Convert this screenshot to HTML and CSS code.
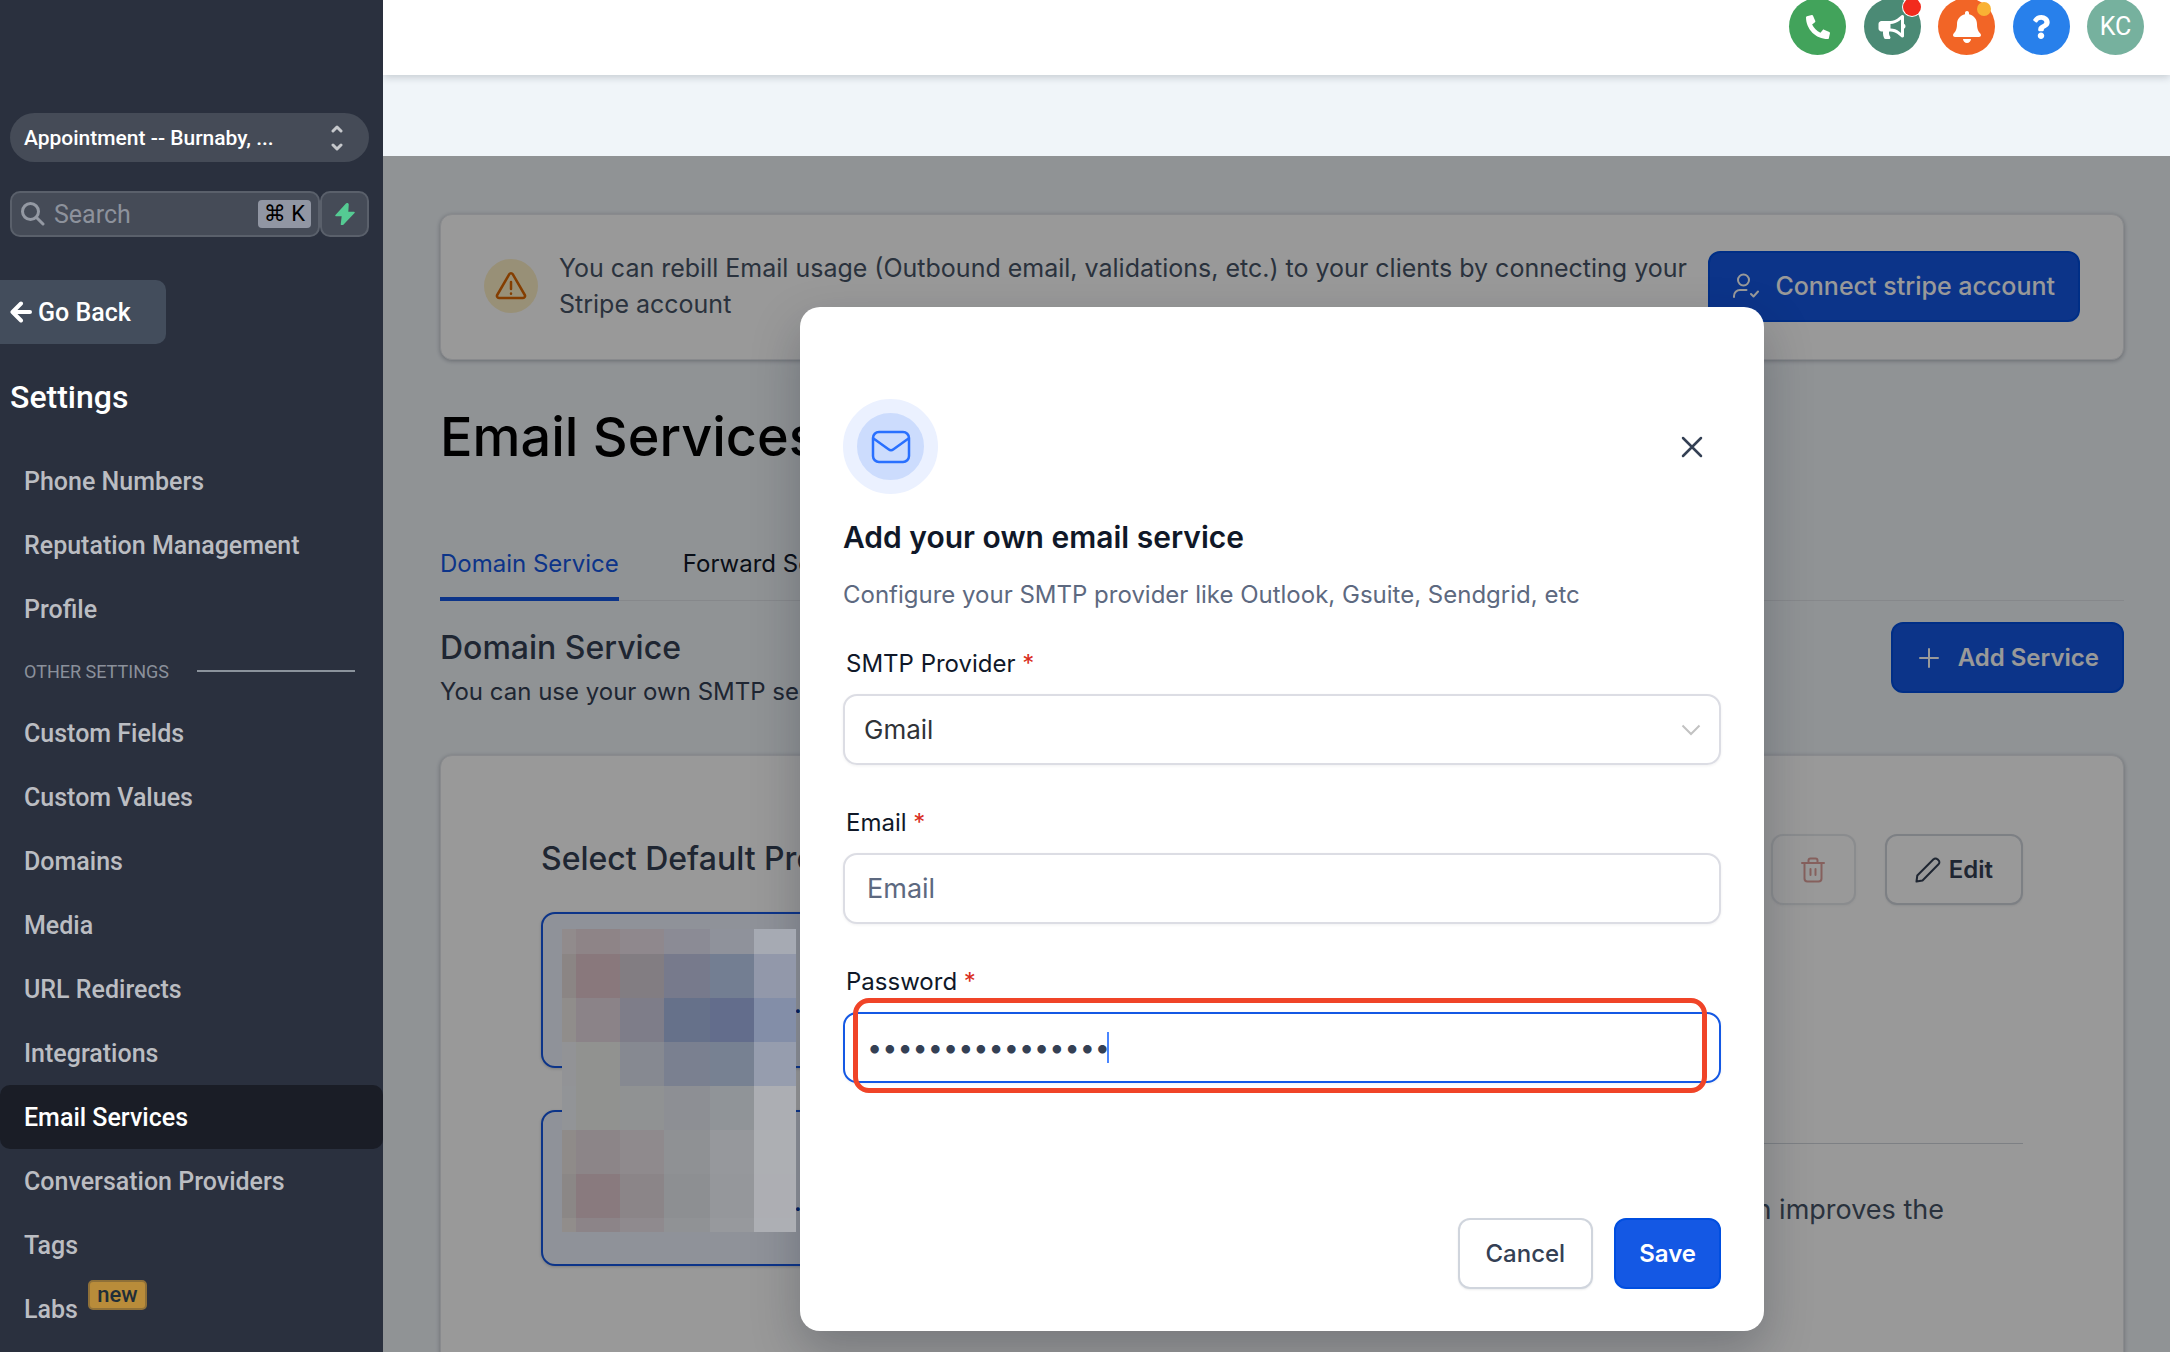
FILE: index.html
```html
<!DOCTYPE html>
<html lang="en">
<head>
<meta charset="utf-8">
<title>Email Services</title>
<link rel="stylesheet" href="styles.css">
</head>
<body>
<aside class="sidebar">
  <button class="account" type="button">
    <span>Appointment -- Burnaby, ...</span>
    <svg width="12" height="26" viewBox="0 0 12 26" fill="none" stroke="#c6c8cc" stroke-width="3" stroke-linecap="round" stroke-linejoin="round"><path d="M2 6l4-4 4 4M2 20l4 4 4-4"/></svg>
  </button>
  <div class="search-row">
    <label class="search">
      <svg width="24" height="24" viewBox="0 0 24 24" fill="none" stroke="#9499a3" stroke-width="3" stroke-linecap="round"><circle cx="9.500" cy="9.500" r="8"/><path d="M15.500 15.500L22 22"/></svg>
      <input type="text" placeholder="Search" aria-label="Search">
      <kbd>⌘ K</kbd>
    </label>
    <button class="quick" type="button" aria-label="Quick actions">
      <svg width="20" height="22" viewBox="0 0 20 22"><path d="M11.500 1L1 12.500h6.500L6.500 21a.6.6 0 0 0 1.100.4L19 9.500h-6.500L13 1.500A.9.9 0 0 0 11.500 1z" fill="#55cb93" stroke="#55cb93" stroke-width="1.500" stroke-linejoin="round"/></svg>
    </button>
  </div>
  <button class="back" type="button">
    <svg width="22" height="22" viewBox="0 0 22 22" fill="none" stroke="#fff" stroke-width="4" stroke-linecap="round" stroke-linejoin="round"><path d="M20 11H3M11 2.500L2.500 11l8.500 8.500"/></svg>
    Go Back
  </button>
  <h2 class="side-title">Settings</h2>
  <nav>
    <a href="#">Phone Numbers</a>
    <a href="#">Reputation Management</a>
    <a href="#">Profile</a>
    <div class="group">OTHER SETTINGS<span></span></div>
    <a href="#">Custom Fields</a>
    <a href="#">Custom Values</a>
    <a href="#">Domains</a>
    <a href="#">Media</a>
    <a href="#">URL Redirects</a>
    <a href="#">Integrations</a>
    <a href="#" class="active">Email Services</a>
    <a href="#">Conversation Providers</a>
    <a href="#">Tags</a>
    <a href="#">Labs<span class="new">new</span></a>
  </nav>
</aside>

<div class="page">
  <header class="topbar">
    <div class="actions">
      <button type="button" class="round green" aria-label="Phone"><svg width="24" height="24" viewBox="0 0 512 512"><path fill="#fff" transform="matrix(-1 0 0 1 512 0)" d="M493.4 24.6l-104-24c-11.3-2.6-22.9 3.3-27.5 13.9l-48 112c-4.200 9.800-1.400 21.300 6.900 28l60.600 49.600c-36 76.700-98.900 140.500-177.200 177.200l-49.600-60.600c-6.800-8.300-18.200-11.100-28-6.900l-112 48C3.900 366.500-2 378.100.6 389.400l24 104C27.100 504.200 36.700 512 48 512c256.100 0 464-207.500 464-464 0-11.200-7.700-20.900-18.600-23.400z"/></svg></button>
      <button type="button" class="round teal" aria-label="Announcements"><svg width="28" height="24" viewBox="0 0 576 512"><path fill="#fff" d="M576 240c0-23.630-12.950-44.040-32-55.120V32.010C544 23.260 537.020 0 512 0c-7.120 0-14.190 2.380-19.980 7.020l-85.030 68.030C364.280 109.190 310.660 128 256 128H64c-35.350 0-64 28.650-64 64v96c0 35.350 28.650 64 64 64h33.700c-1.390 10.480-2.180 21.140-2.180 32 0 39.770 9.260 77.350 25.560 110.940 5.190 10.690 16.520 17.060 28.400 17.060h74.280c26.050 0 41.690-29.840 25.900-50.560-16.400-21.520-26.150-48.360-26.150-77.440 0-11.110 1.620-21.790 4.410-32H256c54.660 0 108.280 18.810 150.980 52.950l85.030 68.030a32.023 32.023 0 0 0 19.980 7.020c24.920 0 32-22.780 32-32V295.130C563.050 284.040 576 263.630 576 240zm-96 141.420l-33.050-26.440C392.950 311.780 325.120 288 256 288v-96c69.120 0 136.950-23.780 190.950-66.980L480 98.580v282.840z"/></svg><span class="dot red"></span></button>
      <button type="button" class="round orange" aria-label="Notifications"><svg width="28" height="32" viewBox="0 0 448 512"><path fill="#fff" d="M224 512c35.320 0 63.970-28.650 63.970-64H160.030c0 35.350 28.650 64 63.970 64zm215.390-149.710c-19.320-20.760-55.470-51.990-55.470-154.290 0-77.700-54.480-139.900-127.940-155.160V32c0-17.670-14.320-32-31.980-32s-31.980 14.330-31.980 32v20.840C118.560 68.100 64.080 130.300 64.080 208c0 102.300-36.150 133.530-55.470 154.290-6 6.450-8.660 14.160-8.610 21.710.11 16.400 12.980 32 32.100 32h383.800c19.120 0 32-15.600 32.100-32 .05-7.550-2.610-15.270-8.610-21.710z"/></svg><span class="dot amber"></span></button>
      <button type="button" class="round blue" aria-label="Help"><svg width="18" height="24" viewBox="0 0 384 512"><path fill="#fff" d="M202.021 0C122.202 0 70.503 32.703 29.914 91.026c-7.363 10.580-5.093 25.086 5.178 32.874l43.138 32.709c10.373 7.865 25.132 6.026 33.253-4.148 25.049-31.381 43.630-49.449 82.757-49.449 30.764 0 68.816 19.799 68.816 49.631 0 22.552-18.617 34.134-48.993 51.164-35.423 19.860-82.299 44.576-82.299 106.405V320c0 13.255 10.745 24 24 24h72.471c13.255 0 24-10.745 24-24v-5.773c0-42.860 125.268-44.645 125.268-160.627C377.504 66.256 286.902 0 202.021 0zM192 373.459c-38.196 0-69.271 31.075-69.271 69.271 0 38.195 31.075 69.270 69.271 69.270s69.271-31.075 69.271-69.271-31.075-69.270-69.271-69.270z"/></svg></button>
      <button type="button" class="round mint">KC</button>
    </div>
  </header>

  <div class="workspace">
    <main class="content">
      <section class="alert">
        <span class="alert-icon"><svg width="34" height="30" viewBox="0 0 34 30" fill="none" stroke-width="2.500" stroke-linecap="round" stroke-linejoin="round"><path d="M15.300 3.200L3.200 24a2 2 0 0 0 1.700 3h24.200a2 2 0 0 0 1.700-3L18.700 3.200a2 2 0 0 0-3.400 0zM17 11v7M17 22.500v.2"/></svg></span>
        <p>You can rebill Email usage (Outbound email, validations, etc.) to your clients by connecting your Stripe account</p>
        <button class="btn primary" type="button">
          <svg width="26" height="26" viewBox="0 0 26 26" fill="none" stroke="currentColor" stroke-width="2" stroke-linecap="round" stroke-linejoin="round"><circle cx="10.500" cy="7" r="5.500"/><path d="M1 24v-1a6 6 0 0 1 6-6h6.500M18 21l2.500 2.500L25 18.500"/></svg>
          Connect stripe account
        </button>
      </section>

      <h1>Email Services</h1>

      <nav class="tabs">
        <a href="#" class="on">Domain Service</a>
        <a href="#">Forward Settings</a>
      </nav>

      <div class="section-head">
        <div class="section-text">
          <h2>Domain Service</h2>
          <p>You can use your own SMTP service</p>
        </div>
        <button class="btn primary" type="button">
          <svg width="26" height="26" viewBox="0 0 26 26" fill="none" stroke="currentColor" stroke-width="2" stroke-linecap="round"><path d="M13 4v18M4 13h18"/></svg>
          Add Service
        </button>
      </div>

      <section class="card">
        <div class="card-head">
          <h2>Select Default Provider</h2>
          <div class="card-actions">
            <button class="btn outline trash" type="button" aria-label="Delete" disabled>
              <svg width="24" height="26" viewBox="0 0 24 26" fill="none" stroke="#c0463c" stroke-width="2" stroke-linecap="round" stroke-linejoin="round"><path d="M1 6h22M7.500 6V3.500a2 2 0 0 1 2-2h5a2 2 0 0 1 2 2V6M3.500 6v15.500a3 3 0 0 0 3 3h11a3 3 0 0 0 3-3V6M9.500 12v6M14.500 12v6"/></svg>
            </button>
            <button class="btn outline edit" type="button">
              <svg width="26" height="26" viewBox="0 0 26 26" fill="none" stroke="currentColor" stroke-width="2" stroke-linecap="round" stroke-linejoin="round"><path d="M1.500 24.500l.8-6L18.500 2.300a2.700 2.700 0 0 1 4 0l1 1a2.700 2.700 0 0 1 0 4L7.500 23.500z"/></svg>
              Edit
            </button>
          </div>
        </div>
        <div class="card-body">
          <div class="options">
            <div class="option">.</div>
            <div class="option">.</div>
            <svg class="mosaic" width="234" height="303" viewBox="0 0 234 303" shape-rendering="crispEdges">
              <g><rect width="14" height="25" fill="#918b8c"/><rect x="14" width="44" height="25" fill="#8e8487"/><rect x="58" width="44" height="25" fill="#8f888d"/><rect x="102" width="46" height="25" fill="#8b8b95"/><rect x="148" width="44" height="25" fill="#8f929b"/><rect x="192" width="42" height="25" fill="#a6aab3"/></g>
              <g transform="translate(0 25)"><rect width="14" height="44" fill="#8b8584"/><rect x="14" width="44" height="44" fill="#89787c"/><rect x="58" width="44" height="44" fill="#827d82"/><rect x="102" width="46" height="44" fill="#777a8c"/><rect x="148" width="44" height="44" fill="#737e92"/><rect x="192" width="42" height="44" fill="#9298aa"/></g>
              <g transform="translate(0 69)"><rect width="14" height="44" fill="#908d8b"/><rect x="14" width="44" height="44" fill="#8b8388"/><rect x="58" width="44" height="44" fill="#7e7d89"/><rect x="102" width="46" height="44" fill="#66718a"/><rect x="148" width="44" height="44" fill="#636d8c"/><rect x="192" width="42" height="44" fill="#838ea8"/></g>
              <g transform="translate(0 113)"><rect width="14" height="44" fill="#929396"/><rect x="14" width="44" height="44" fill="#919290"/><rect x="58" width="44" height="44" fill="#868991"/><rect x="102" width="46" height="44" fill="#7a8090"/><rect x="148" width="44" height="44" fill="#778192"/><rect x="192" width="42" height="44" fill="#969dae"/></g>
              <g transform="translate(0 157)"><rect width="14" height="44" fill="#929497"/><rect x="14" width="44" height="44" fill="#919290"/><rect x="58" width="44" height="44" fill="#909293"/><rect x="102" width="46" height="44" fill="#8d8f94"/><rect x="148" width="44" height="44" fill="#909498"/><rect x="192" width="42" height="44" fill="#acaeb3"/></g>
              <g transform="translate(0 201)"><rect width="14" height="44" fill="#8f8b89"/><rect x="14" width="44" height="44" fill="#8c8588"/><rect x="58" width="44" height="44" fill="#8f8a8d"/><rect x="102" width="46" height="44" fill="#8f9194"/><rect x="148" width="44" height="44" fill="#96989c"/><rect x="192" width="42" height="44" fill="#adafb3"/></g>
              <g transform="translate(0 245)"><rect width="14" height="44" fill="#8b8786"/><rect x="14" width="44" height="44" fill="#897a7e"/><rect x="58" width="44" height="44" fill="#8b8588"/><rect x="102" width="46" height="44" fill="#8d8f92"/><rect x="148" width="44" height="44" fill="#95979b"/><rect x="192" width="42" height="44" fill="#adaeb3"/></g>
              <g transform="translate(0 289)"><rect width="14" height="14" fill="#918d8b"/><rect x="14" width="44" height="14" fill="#8c8488"/><rect x="58" width="44" height="14" fill="#8f8a8e"/><rect x="102" width="46" height="14" fill="#909295"/><rect x="148" width="44" height="14" fill="#97999d"/><rect x="192" width="42" height="14" fill="#adafb4"/></g>
            </svg>
          </div>
          <div class="note"><p>domain improves the</p></div>
        </div>
      </section>
    </main>

    <div class="overlay">
      <form class="modal" role="dialog" aria-labelledby="modal-title">
        <div class="modal-top">
          <span class="mail"><svg width="40" height="34" viewBox="0 0 40 34" fill="none" stroke="#2970ff" stroke-width="2.500" stroke-linecap="round" stroke-linejoin="round"><rect x="2" y="2" width="36" height="30" rx="6"/><path d="M2.500 8.500l15 10.800a4 4 0 0 0 5 0l15-10.800"/></svg></span>
          <button class="close" type="button" aria-label="Close"><svg width="22" height="22" viewBox="0 0 22 22" fill="none" stroke="#344054" stroke-width="2.500" stroke-linecap="round"><path d="M2 2l18 18M20 2L2 20"/></svg></button>
        </div>
        <h2 id="modal-title">Add your own email service</h2>
        <p class="lead">Configure your SMTP provider like Outlook, Gsuite, Sendgrid, etc</p>

        <label for="provider">SMTP Provider <i>*</i></label>
        <div class="field">
          <select id="provider"><option>Gmail</option></select>
          <svg class="chevron" width="20" height="12" viewBox="0 0 20 12" fill="none" stroke="#c2c2c2" stroke-width="2"><path d="M1.500 1.500L10 10l8.500-8.500"/></svg>
        </div>

        <label for="email">Email <i>*</i></label>
        <div class="field"><input id="email" type="email" placeholder="Email"></div>

        <label for="password">Password <i>*</i></label>
        <div class="field">
          <input id="password" class="focused" type="password" value="abcdefghijklmnop">
          <span class="caret"></span>
          <span class="marker"></span>
        </div>

        <div class="modal-actions">
          <button class="btn outline" type="button">Cancel</button>
          <button class="btn primary" type="submit">Save</button>
        </div>
      </form>
    </div>
  </div>
</div>
</body>
</html>
```

FILE: styles.css
```css
* { box-sizing: border-box; }
body {
  margin: 0;
  display: grid;
  grid-template-columns: 383px 1fr;
  height: 100vh;
  overflow: hidden;
  font-family: Inter, "Liberation Sans", sans-serif;
  font-size: 24px;
  color: #101828;
}
h1, h2, p { margin: 0; }
button, input, select { font: inherit; color: inherit; }
button { border: 0; padding: 0; }
a { color: inherit; text-decoration: none; }
svg { flex: none; display: block; }

/* Sidebar */
.sidebar {
  background: #2a303e;
  color: #fff;
  font-family: Roboto, sans-serif;
  font-size: 25px;
  font-weight: 500;
  padding-top: 113px;
  overflow: hidden;
}
.account {
  display: flex;
  align-items: center;
  justify-content: space-between;
  margin-left: 10px;
  width: 359px;
  height: 49px;
  padding: 0 26px 0 14px;
  border-radius: 25px;
  background: #454b57;
  font-size: 21px;
}
.search-row { display: flex; margin: 29px 14px 0 10px; height: 46px; }
.search, .quick {
  display: flex;
  align-items: center;
  background: #454b57;
  border: 2px solid #5a606b;
  border-radius: 10px;
}
.search { flex: 1; min-width: 0; padding: 0 7px 0 9px; }
.search input {
  flex: 1;
  min-width: 0;
  margin-left: 9px;
  padding: 0;
  border: 0;
  background: none;
  font-weight: 400;
}
.search input::placeholder { color: #8d929c; opacity: 1; }
kbd {
  width: 53px;
  background: #9196a3;
  color: #000;
  font: 400 22px/28px Roboto, "DejaVu Sans", sans-serif;
  text-align: center;
  white-space: nowrap;
  border-radius: 4px;
}
.quick { width: 49px; justify-content: center; }
.back {
  display: flex;
  align-items: center;
  gap: 6px;
  width: 166px;
  height: 64px;
  margin-top: 43px;
  padding-left: 10px;
  background: #434d5c;
  border-radius: 0 10px 10px 0;
}
.side-title { margin: 33px 0 32px 10px; font-size: 32px; line-height: 40px; font-weight: 500; }
.sidebar nav a {
  display: flex;
  align-items: center;
  height: 64px;
  padding-left: 24px;
  border-radius: 10px;
  color: #bbbdc2;
}
.sidebar nav .active { background: #1a1d26; color: #fff; }
.group {
  display: flex;
  align-items: center;
  height: 60px;
  padding: 0 28px 0 24px;
  gap: 28px;
  font-size: 18px;
  font-weight: 400;
  color: #8b909b;
}
.group span { flex: 1; height: 2px; background: #8b939c; }
.new {
  align-self: flex-start;
  margin: 3px 0 0 10px;
  width: 59px;
  border: 2px solid #8f7038;
  border-radius: 5px;
  background: #b98c3a;
  color: #1f2e38;
  font-size: 22px;
  line-height: 26px;
  text-align: center;
}

/* Top bar */
.page { display: flex; flex-direction: column; min-width: 0; background: #f0f5f9; overflow: hidden; }
.topbar {
  display: flex;
  justify-content: flex-end;
  align-items: flex-end;
  height: 75px;
  flex: none;
  padding: 0 26px 20px 0;
  background: #fff;
  box-shadow: 0 2px 8px rgba(16, 24, 40, .2);
  margin-bottom: 81px;
}
.actions { display: flex; justify-content: space-between; width: 355px; }
.round {
  position: relative;
  display: flex;
  align-items: center;
  justify-content: center;
  width: 57px;
  height: 57px;
  border-radius: 50%;
  color: #fff;
}
.green { background: #42a35b; }
.teal { background: #4b8a75; }
.orange { background: #f26526; }
.blue { background: #2880eb; }
.mint { background: #76b19e; font: 400 25px Roboto, sans-serif; }
.dot { position: absolute; border-radius: 50%; }
.red { top: 0; right: 0; width: 18px; height: 18px; background: #f22b1d; box-shadow: 0 0 0 1px #fff; }
.amber { top: 4px; right: 4px; width: 14px; height: 14px; background: #f9b234; }

/* Workspace */
.workspace { position: relative; flex: 1; min-height: 0; }
.content { padding: 58px 46px 0 57px; height: 100%; overflow: hidden; }
.btn {
  display: flex;
  align-items: center;
  justify-content: center;
  gap: 16px;
  height: 71px;
  border-radius: 12px;
  white-space: nowrap;
}
.primary { padding: 0 23px; background: #1458e4; border: 2px solid #004ee0; color: #fff; font-weight: 600; }
.outline { padding: 0 26px; background: #fff; border: 2px solid #d0d5dd; color: #344054; font-weight: 500; box-shadow: 0 1px 2px rgba(16, 24, 40, .08); }
.alert, .card {
  background: #fff;
  border: 1px solid #e4e7ec;
  border-radius: 12px;
  box-shadow: 0 1px 4px rgba(16, 24, 40, .3);
}
.alert { display: flex; align-items: center; padding: 35px 43px 37px; font-size: 25px; }
.alert-icon {
  display: flex;
  align-items: center;
  justify-content: center;
  flex: none;
  width: 54px;
  height: 54px;
  margin-right: 21px;
  border-radius: 50%;
  background: #fef0c7;
}
.alert-icon svg { stroke: #dc6803; }
.alert p { flex: 1; margin-right: 16px; line-height: 36px; color: #475467; }
.alert .btn { font-weight: 500; }
h1 { margin-top: 45px; font-size: 54px; line-height: 64px; font-weight: 500; color: #000; }
.tabs { display: flex; gap: 64px; margin-top: 77px; border-bottom: 1px solid #e0e3e8; }
.tabs a { padding-bottom: 15px; line-height: 36px; border-bottom: 4px solid transparent; margin-bottom: -1px; }
.tabs .on { color: #1458e4; border-color: #1458e4; }
.section-head { display: flex; justify-content: space-between; align-items: flex-start; margin-top: 21px; }
.section-text { padding-top: 6px; }
.content h2 { font-size: 32px; line-height: 40px; font-weight: 500; color: #344054; }
.section-text p { margin-top: 8px; line-height: 32px; color: #344054; }
.card { margin-top: 47px; padding: 78px 100px 120px; }
.card-head { display: flex; justify-content: space-between; align-items: flex-start; }
.card-head h2 { padding-top: 5px; }
.card-actions { display: flex; gap: 29px; }
.trash { width: 85px; opacity: .5; }
.edit { gap: 8px; padding: 0 28px; font-weight: 600; }
.card-body { display: grid; grid-template-columns: 1fr 1fr; margin-top: 7px; }
.options { position: relative; display: grid; gap: 42px; align-content: start; }
.option {
  height: 156px;
  padding: 76px 0 0 251px;
  border: 2px solid #1458e4;
  border-radius: 14px;
  background: #eff4ff;
  box-shadow: 0 1px 3px rgba(16, 24, 40, .2);
  color: #00359e;
  font-weight: 600;
}
.mosaic { position: absolute; left: 21px; top: 17px; z-index: 2; }
.note { margin-top: 231px; padding: 48px 79px 0 0; border-top: 1px solid #d0d5dd; font-size: 27px; line-height: 36px; text-align: right; color: #475467; }

/* Modal */
.overlay {
  position: absolute;
  inset: 0;
  z-index: 1;
  display: flex;
  justify-content: center;
  align-items: flex-start;
  padding: 151px 0 0 11px;
  background: rgba(0, 0, 0, .4);
}
.modal {
  width: 964px;
  padding: 92px 43px 42px;
  border-radius: 20px;
  background: #fff;
  box-shadow: 0 20px 48px rgba(16, 24, 40, .25);
}
.modal-top { display: flex; align-items: center; justify-content: space-between; }
.mail {
  display: flex;
  align-items: center;
  justify-content: center;
  width: 95px;
  height: 95px;
  border: 14px solid #ebf1ff;
  border-radius: 50%;
  background: #ccdcfd;
}
.close { padding: 8px; margin-right: 10px; background: none; }
.modal h2 { margin-top: 23px; font-size: 30px; line-height: 40px; font-weight: 600; }
.lead { margin-top: 20px; line-height: 36px; color: #5d6980; }
.modal label { display: block; margin: 33px 0 0 3px; line-height: 36px; }
.modal label i { font-style: normal; color: #d92d20; }
.field { position: relative; margin-top: 12px; }
.field input, .field select {
  display: block;
  width: 100%;
  height: 71px;
  padding: 0 22px;
  border: 2px solid #dcdde4;
  border-radius: 14px;
  background: #fff;
  appearance: none;
  box-shadow: 0 1px 3px rgba(16, 24, 40, .06);
  outline: 0;
  font-size: 27px;
}
.field select { padding: 0 19px; color: #303338; font-size: 26px; }
.field + label { margin-top: 40px; }
.field input::placeholder { color: #5d6980; opacity: 1; }
.field .focused { border-color: #1458e4; color: #344054; }
.chevron { position: absolute; right: 20px; top: 30px; }
.caret { position: absolute; left: 264px; top: 20px; width: 2px; height: 31px; background: #4a86ff; }
.marker { position: absolute; inset: -14px 14px -10px 10px; border: 5px solid #f04428; border-radius: 16px; }
.modal-actions { display: flex; justify-content: flex-end; gap: 21px; margin-top: 135px; }
```
